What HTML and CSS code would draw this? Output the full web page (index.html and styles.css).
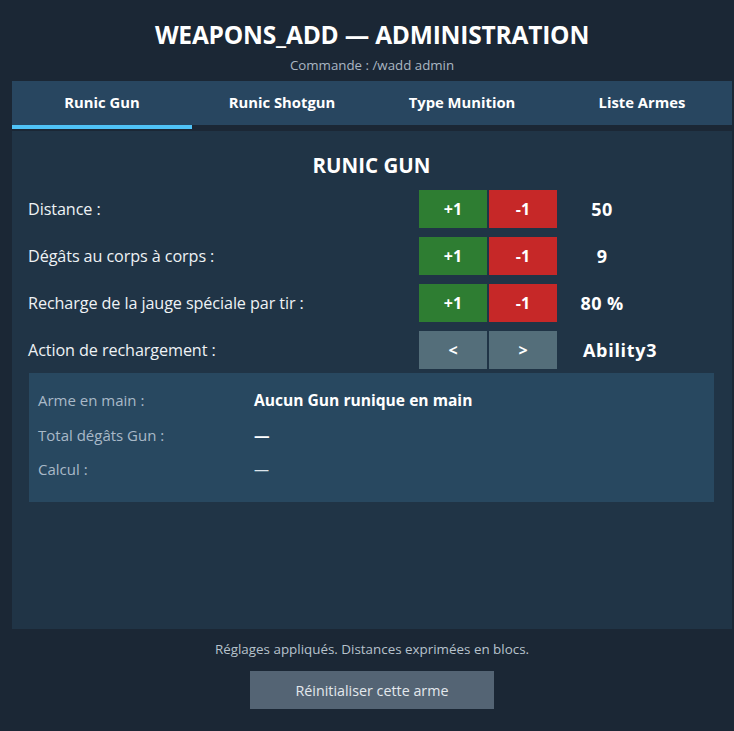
FILE: index.html
```html
<!DOCTYPE html>
<html lang="fr">
<head>
    <meta charset="UTF-8">
    <meta name="viewport" content="width=device-width, initial-scale=1.0">
    <title>Weapons_add — Administration</title>
    <link rel="stylesheet" href="styles.css">
</head>
<body>
<div class="wrapper">
    <header>
        <h1>WEAPONS_ADD — ADMINISTRATION</h1>
        <p class="subtitle">Commande : /wadd admin</p>
    </header>
    <nav class="tabs">
        <div class="tab active">Runic Gun</div>
        <div class="tab">Runic Shotgun</div>
        <div class="tab">Type Munition</div>
        <div class="tab">Liste Armes</div>
    </nav>
    <main class="panel">
        <h2>RUNIC GUN</h2>
        <div class="row">
            <span class="label">Distance :</span>
            <div class="buttons">
                <button class="plus">+1</button>
                <button class="minus">-1</button>
            </div>
            <span class="value">50</span>
        </div>
        <div class="row">
            <span class="label">Dégâts au corps à corps :</span>
            <div class="buttons">
                <button class="plus">+1</button>
                <button class="minus">-1</button>
            </div>
            <span class="value">9</span>
        </div>
        <div class="row">
            <span class="label">Recharge de la jauge spéciale par tir :</span>
            <div class="buttons">
                <button class="plus">+1</button>
                <button class="minus">-1</button>
            </div>
            <span class="value">80 %</span>
        </div>
        <div class="row">
            <span class="label">Action de rechargement :</span>
            <div class="buttons">
                <button class="nav">&lt;</button>
                <button class="nav">&gt;</button>
            </div>
            <span class="value text">Ability3</span>
        </div>
        <div class="info">
            <span class="info-label">Arme en main :</span>
            <span class="info-value strong">Aucun Gun runique en main</span>
            <span class="info-label">Total dégâts Gun :</span>
            <span class="info-value strong">—</span>
            <span class="info-label">Calcul :</span>
            <span class="info-value">—</span>
        </div>
    </main>
    <footer>
        <p class="note">Réglages appliqués. Distances exprimées en blocs.</p>
        <button class="reset">Réinitialiser cette arme</button>
    </footer>
</div>
</body>
</html>
```

FILE: styles.css
```css
body {
    font-family: "Open Sans", "Noto Sans", sans-serif;
    margin: 0;
    padding: 0;
    background-color: #1b2735;
    color: #fff;
}

.wrapper {
    width: 720px;
    margin-left: 12px;
}

header {
    text-align: center;
    padding-top: 22px;
    padding-bottom: 8px;
}

h1 {
    margin: 0;
    font-size: 24.5px;
    font-weight: 700;
    line-height: 26px;
    letter-spacing: -0.2px;
}

.subtitle {
    margin: 9px 0 0;
    font-size: 13.3px;
    color: #aab6c2;
    line-height: 16px;
}

/* tab strip: 44px bar plus the 4px underline row below it */
.tabs {
    display: flex;
    background: linear-gradient(#284660 44px, #1b2735 44px);
}

.tab {
    flex: 1;
    text-align: center;
    font-size: 14.8px;
    font-weight: 700;
    height: 44px;
    line-height: 42px;
    border-bottom: 4px solid transparent;
}

.tab.active {
    border-bottom-color: #4fc3f7;
}

.panel {
    margin-top: 2px;
    background-color: #203446;
    height: 498px;
    box-sizing: border-box;
    padding: 22px 17px 0 16px;
}

h2 {
    margin: 0 0 13px;
    text-align: center;
    font-size: 20.5px;
    font-weight: 700;
    line-height: 24px;
}

.row {
    display: grid;
    grid-template-columns: 391px 138px 90px;
    align-items: center;
    height: 38px;
    margin-bottom: 9px;
}

.label {
    font-size: 16.2px;
    color: #eef2f5;
    letter-spacing: -0.1px;
}

.buttons {
    display: flex;
    gap: 2px;
}

button {
    font-family: inherit;
    border: none;
    color: #fff;
    cursor: pointer;
}

.buttons button {
    width: 68px;
    height: 38px;
    font-size: 16px;
    font-weight: 700;
    padding: 0;
}

.plus {
    background-color: #2e7d32;
}

.minus {
    background-color: #c62828;
}

.nav {
    background-color: #546e7a;
}

.value {
    text-align: center;
    font-size: 18px;
    font-weight: 700;
    letter-spacing: 0.4px;
}

.value.text {
    text-align: left;
    padding-left: 26px;
    white-space: nowrap;
    letter-spacing: 0.7px;
}

.info {
    margin: -5px 1px 0;
    background-color: #284860;
    height: 129px;
    box-sizing: border-box;
    padding: 10px 9px 0;
    display: grid;
    grid-template-columns: 216px 1fr;
    grid-auto-rows: 34.5px;
    align-items: center;
}

.info-label {
    font-size: 15px;
    color: #a9b9c8;
}

.info-value {
    font-size: 15px;
    color: #dde5ec;
}

.info-value.strong {
    font-size: 15.6px;
    font-weight: 700;
    color: #fff;
}

footer {
    text-align: center;
}

.note {
    margin: 11px 0 0;
    font-size: 13.4px;
    color: #b7c2cc;
    line-height: 18px;
}

.reset {
    margin-top: 13px;
    width: 244px;
    height: 38px;
    background-color: #546474;
    color: #e3e8ed;
    font-size: 14.3px;
}
```
